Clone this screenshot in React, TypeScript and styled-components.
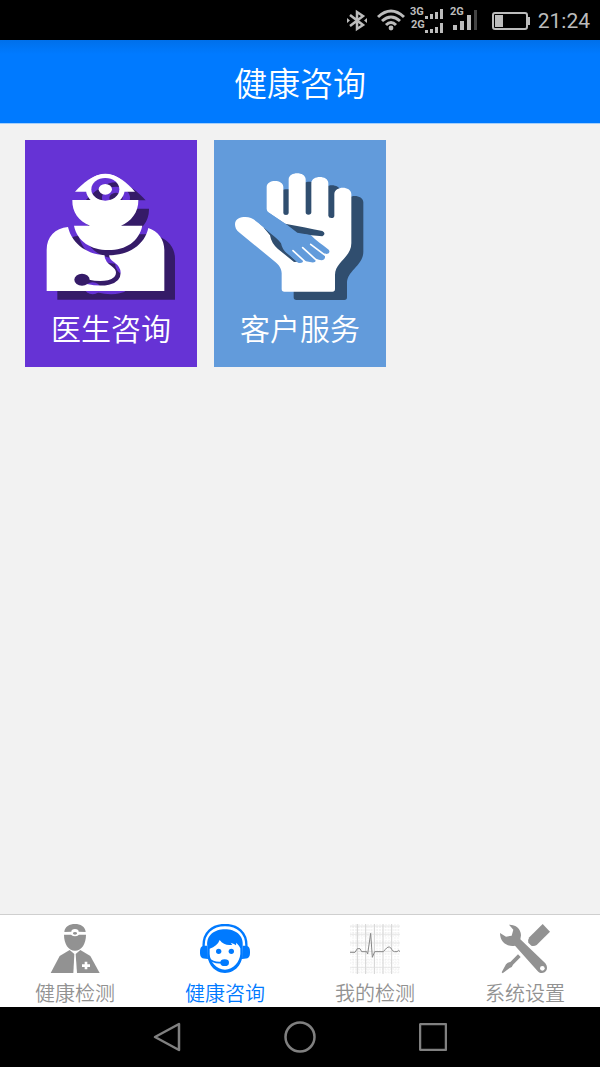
import React from "react";
import styled, { createGlobalStyle } from "styled-components";

const GlobalStyle = createGlobalStyle`
  * { box-sizing: border-box; }
  body {
    margin: 0;
    background: #f2f2f2;
    font-family: "Noto Sans CJK SC", "Noto Sans", sans-serif;
  }
  button { font: inherit; border: 0; padding: 0; margin: 0; cursor: pointer; }
  svg { display: block; flex: none; }
`;

const Screen = styled.div`
  min-height: 100vh;
  display: flex;
  flex-direction: column;
`;

const StatusBar = styled.div`
  height: 40px;
  padding-right: 10px;
  background: #000;
  color: #bcbcbc;
  display: flex;
  align-items: center;
  justify-content: flex-end;
`;

const StatusIcon = styled.svg<{ $gap: number }>`
  margin-right: ${(p) => p.$gap}px;
  font-family: Roboto, sans-serif;
  font-weight: 700;
  font-size: 11px;
`;

const Clock = styled.time`
  padding-top: 2px;
  font-family: Roboto, sans-serif;
  font-size: 21px;
  line-height: 38px;
`;

const Header = styled.header`
  height: 84px;
  background: linear-gradient(#0070ea, #007aff 14px);
  border-bottom: 1px solid #a6d0fb;
  display: flex;
  align-items: center;
  justify-content: center;
`;

const Title = styled.h1`
  margin: 0;
  color: #fff;
  font-size: 33px;
  line-height: 48px;
  font-weight: 350;
`;

const Content = styled.main`
  flex: 1;
  padding: 16px 25px;
  display: flex;
  flex-wrap: wrap;
  align-items: flex-start;
  align-content: flex-start;
  gap: 17px;
`;

const Tile = styled.button<{ $color: string }>`
  && { padding: 33px 0 22px; }
  width: 172px;
  background: ${(p) => p.$color};
  color: #fff;
  display: flex;
  flex-direction: column;
  align-items: center;
  gap: 8px;
`;

const TileLabel = styled.span`
  font-size: 30px;
  line-height: 36px;
  font-weight: 350;
`;

const TabBar = styled.nav`
  height: 93px;
  background: #fff;
  border-top: 1px solid #cfcfcf;
  display: grid;
  grid-template-columns: repeat(4, 1fr);
`;

const Tab = styled.button<{ $active?: boolean }>`
  && { padding-top: 9px; }
  background: none;
  color: ${(p) => (p.$active ? "#007aff" : "#929292")};
  display: flex;
  flex-direction: column;
  align-items: center;
  gap: 7px;
`;

const TabLabel = styled.span`
  font-size: 20px;
  line-height: 24px;
  font-weight: 350;
`;

const SystemNav = styled.nav`
  height: 60px;
  padding: 0 100px;
  background: #000;
  display: grid;
  grid-template-columns: repeat(3, 1fr);
`;

const SystemButton = styled.button`
  background: none;
  color: #808080;
  display: flex;
  align-items: center;
  justify-content: center;
`;

const BluetoothIcon = () => (
  <StatusIcon $gap={9} width="22" height="24" viewBox="0 0 22 24" fill="none" stroke="currentColor" strokeWidth="2.500">
    <path d="M4 7 L17 17 L11 21 V4 L17 8 L4 18" />
    <path d="M1 10 L4 12.500 L1 15 Z M21 10 L18 12.500 L21 15 Z" fill="currentColor" stroke="none" />
  </StatusIcon>
);

const WifiIcon = () => (
  <StatusIcon $gap={5} width="28" height="22" viewBox="0 0 28 22" fill="none" stroke="currentColor" strokeWidth="3">
    <path d="M1 8 Q14 -4 27 8" />
    <path d="M5 12 Q14 4 23 12" />
    <path d="M9 16 Q14 11 19 16" />
    <circle cx="14" cy="19" r="2.400" fill="currentColor" stroke="none" />
  </StatusIcon>
);

const DualSignalIcon = () => (
  <StatusIcon $gap={5} width="35" height="30" viewBox="0 0 35 30" fill="currentColor">
    <text x="0" y="10">3G</text>
    <text x="1" y="23">2G</text>
    <path d="M15 11h3v3h-3z M20 9h3v5h-3z M25 7h3v7h-3z M30 4h3v10h-3z" />
    <path d="M15 25h3v3h-3z M20 24h3v4h-3z M25 22h3v6h-3z M30 18h3v10h-3z" />
  </StatusIcon>
);

const SignalIcon = () => (
  <StatusIcon $gap={14} width="28" height="30" viewBox="0 0 28 30" fill="currentColor">
    <text x="0" y="10">2G</text>
    <path d="M3 20h4v5h-4z M10 16h4v9h-4z M17 10h4v15h-4z" />
    <path d="M24 5h3v20h-3z" fill="#444" />
  </StatusIcon>
);

const BatteryIcon = () => (
  <StatusIcon $gap={8} width="38" height="22" viewBox="0 0 38 22" fill="none">
    <rect x="1" y="4" width="34" height="16" rx="2" stroke="currentColor" strokeWidth="2" />
    <path d="M3 6h8v12h-8z M36 8h2v8h-2z" fill="currentColor" />
  </StatusIcon>
);

const DoctorIcon = () => (
  <svg width="130" height="128" viewBox="78 114 390 384" aria-hidden="true">
    <defs>
      <mask id="doctor" maskUnits="userSpaceOnUse" x="70" y="100" width="400" height="400">
        <g fill="#fff">
          <path d="M165 170 C188 145 219 117 256 117 C293 117 323 145 345 170 Z" />
          <ellipse cx="256" cy="164" rx="58" ry="48" />
          <path d="M157 195 H355 C356 233 332 260 303 272 H367 C356 320 318 345 265 345 C214 345 172 320 162 272 H210 C176 258 156 232 157 195 Z" />
          <path d="M80 468 V345 C80 306 105 279 144 276 C157 330 205 361 265 361 C326 361 374 330 385 279 C414 289 433 313 433 345 V468 Z" />
        </g>
        <ellipse cx="256" cy="163" rx="42" ry="34" fill="#000" />
        <ellipse cx="256" cy="163" rx="20" ry="16" fill="#fff" />
        <path d="M260 357 C260 390 295 384 295 413 C295 445 247 450 202 440" fill="none" stroke="#000" strokeWidth="14" />
        <ellipse cx="186" cy="434" rx="23" ry="18" fill="#000" />
      </mask>
    </defs>
    <g transform="translate(32 26)">
      <rect x="70" y="100" width="400" height="400" fill="#351b68" mask="url(#doctor)" />
    </g>
    <rect x="70" y="100" width="400" height="400" fill="#fff" mask="url(#doctor)" />
  </svg>
);

const HAND =
  "M75 268 C75 251 92 246 106 246 C121 246 131 252 144 263 L235 330 L260 290 L177 233 Q170 228 170 222 V155 C171 132 219 132 220 155 V234 Q220 240 228 240 Q236 240 236 234 V133 C237 109 286 109 287 133 V232 Q287 239 295 239 Q304 239 304 232 V144 C305 120 354 120 355 144 V242 Q356 249 364 249 Q373 249 373 242 V177 C374 152 423 152 424 177 V325 C424 367 375 381 375 420 V462 Q375 470 367 470 H223 Q215 470 215 462 V415 C215 400 207 390 195 380 L87 292 C78 285 75 276 75 268 Z";

const HandIcon = () => (
  <svg width="130" height="128" viewBox="75 114 390 384" aria-hidden="true">
    <path d={HAND} fill="#304e6f" transform="translate(36 25)" />
    <path d={HAND} fill="#fff" />
    <path d="M160 277 L204 300 L226 348 L262 380 L252 381 L203 341 Q184 325 180 301 Z" fill="#304e6f" />
    <path d="M225 266 C262 272 302 281 337 288 Q350 296 337 304 L296 300 L255 296 Z" fill="#304e6f" />
    <path d="M164 232 L177 233 L232 270 L262 293 L302 300 C316 315 338 330 356 344 Q363 354 350 357 Q349 357 343 355 Q350 374 334 376 Q328 375 318 371 Q319 384 304 382 L280 377 Q278 386 264 383 L229 353 Q217 344 213 325 Q206 314 180 294 L148 266 Z" fill="#629bdb" />
    <path d="M249 347 L285 380 M278 338 L320 376 M302 328 L347 362" stroke="#fff" strokeWidth="5" strokeLinecap="round" />
  </svg>
);

const TabIcon = ({ children }: { children: React.ReactNode }) => (
  <svg width="50" height="50" viewBox="90 42 150 150" fill="currentColor" aria-hidden="true">
    {children}
  </svg>
);

const CheckupIcon = () => (
  <TabIcon>
    <path d="M133 66 C134 50 149 42 165 42 C181 42 196 50 197 66 L176 65 A11 8 0 0 0 154 65 Z" />
    <ellipse cx="165" cy="70" rx="6" ry="4" />
    <path d="M132 74 H153 Q165 84 177 74 H198 C198 101 185 122 165 122 C145 122 132 101 132 74 Z" />
    <path d="M149 120 L163 132 L160 189 H92 L119 138 Z" />
    <path d="M181 120 L211 138 L239 189 H171 L167 132 Z" />
    <path d="M198 155 V178 M186 167 H210" stroke="#fff" strokeWidth="8" />
  </TabIcon>
);

const ConsultIcon = () => (
  <TabIcon>
    <path d="M101 112 C98 68 128 45 165 45 C202 45 232 68 229 112" fill="none" stroke="currentColor" strokeWidth="7" />
    <path d="M112 107 H105 C92 107 90 114 90 127 C90 142 94 147 114 147 Z" />
    <path d="M218 107 H225 C238 107 240 114 240 127 C240 142 236 147 216 147 Z" />
    <path d="M112 108 C108 76 134 58 165 58 C196 58 222 76 218 108 V130 C218 160 198 189 165 189 C132 189 112 160 112 130 Z" />
    <path d="M119 116 C134 111 144 103 149 90 C158 103 173 107 187 104 L182 98 Q194 101 198 106 L199 98 Q207 106 211 115 V132 C209 156 190 179 165 179 C140 179 120 156 119 132 Z" fill="#fff" />
    <circle cx="146" cy="124" r="8" />
    <circle cx="184" cy="124" r="8" />
    <path d="M116 145 C128 158 142 159 157 157" fill="none" stroke="currentColor" strokeWidth="5" />
    <ellipse cx="164" cy="158" rx="13" ry="10" />
  </TabIcon>
);

const minor = [99, 108, 117, 126, 144, 153, 171, 180, 198, 207, 225, 234];
const major = [112, 137, 163, 189, 215];

const EcgIcon = () => (
  <TabIcon>
    <g fill="none">
      {minor.map((v) => (
        <path key={v} d={`M${v} 42 V192 M90 ${v - 48} H240`} stroke="#e4e4e4" strokeWidth="2" strokeDasharray="4 4" />
      ))}
      {major.map((v) => (
        <path key={v} d={`M${v} 42 V192`} stroke="#d2d2d2" strokeWidth="3" />
      ))}
      <path d="M90 48 H240 M90 73 H240 M90 99 H240 M90 125 H240 M90 172 H240" stroke="#dcdcdc" strokeWidth="2" />
      <path
        d="M90 127 H105 L112 116 L120 116 L125 125 H140 L143 132 L152 70 L157 142 L164 125 H190 C198 116 202 110 208 111 C216 113 214 123 223 125 H231 L236 121 L240 125"
        stroke="#888"
        strokeWidth="3"
      />
    </g>
  </TabIcon>
);

const ToolsIcon = () => (
  <TabIcon>
    <path d="M117 44 C135 43 153 55 153 76 L151 88 L226 160 C236 173 230 189 216 189 C209 189 206 187 202 182 L135 107 C112 111 90 97 90 69 L108 80 L125 77 L130 59 Z" />
    <circle cx="217" cy="175" r="7" fill="#fff" />
    <path d="M218 42 L240 65 L200 105 Q193 109 184 107 L175 98 Q173 89 178 82 Z" />
    <path d="M144 133 L152 141 L129 164 Q127 172 119 174 L98 190 L95 187 L108 163 Q113 156 121 156 Z" />
  </TabIcon>
);

const tabs = [
  { label: "健康检测", Icon: CheckupIcon },
  { label: "健康咨询", Icon: ConsultIcon, active: true },
  { label: "我的检测", Icon: EcgIcon },
  { label: "系统设置", Icon: ToolsIcon },
];

export default function App() {
  return (
    <Screen>
      <GlobalStyle />
      <StatusBar>
        <BluetoothIcon />
        <WifiIcon />
        <DualSignalIcon />
        <SignalIcon />
        <BatteryIcon />
        <Clock>21:24</Clock>
      </StatusBar>
      <Header>
        <Title>健康咨询</Title>
      </Header>
      <Content>
        <Tile type="button" $color="#6633d5">
          <DoctorIcon />
          <TileLabel>医生咨询</TileLabel>
        </Tile>
        <Tile type="button" $color="#629bdb">
          <HandIcon />
          <TileLabel>客户服务</TileLabel>
        </Tile>
      </Content>
      <TabBar>
        {tabs.map(({ label, Icon, active }) => (
          <Tab key={label} type="button" $active={active} aria-current={active ? "page" : undefined}>
            <Icon />
            <TabLabel>{label}</TabLabel>
          </Tab>
        ))}
      </TabBar>
      <SystemNav>
        <SystemButton type="button" aria-label="返回">
          <svg width="28" height="32" viewBox="0 0 28 32" fill="none" stroke="currentColor" strokeWidth="2.500" strokeLinejoin="round">
            <path d="M26 3 V29 L2 16 Z" />
          </svg>
        </SystemButton>
        <SystemButton type="button" aria-label="主页">
          <svg width="32" height="32" viewBox="0 0 32 32" fill="none" stroke="currentColor" strokeWidth="2.500">
            <circle cx="16" cy="16" r="14.500" />
          </svg>
        </SystemButton>
        <SystemButton type="button" aria-label="最近任务">
          <svg width="28" height="28" viewBox="0 0 28 28" fill="none" stroke="currentColor" strokeWidth="2.500" strokeLinejoin="round">
            <rect x="1" y="1" width="26" height="26" rx="1" />
          </svg>
        </SystemButton>
      </SystemNav>
    </Screen>
  );
}
